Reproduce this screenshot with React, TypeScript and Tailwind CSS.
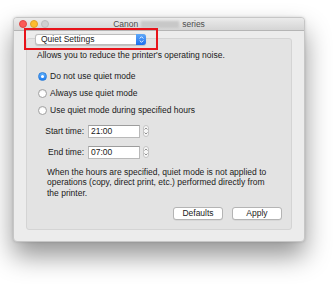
import React from "react";

const font = { fontFamily: '"Liberation Sans", Arial, sans-serif' };

function Radio({ checked, label }: { checked?: boolean; label: string }) {
  return (
    <div className="flex items-center h-[17px]">
      {checked ? (
        <div className="w-[9px] h-[9px] rounded-full bg-gradient-to-b from-[#5fb0fb] to-[#1a7cf2] border border-[#2f7fd8] flex items-center justify-center">
          <div className="w-[3px] h-[3px] rounded-full bg-white" />
        </div>
      ) : (
        <div className="w-[9px] h-[9px] rounded-full bg-white border border-[#9f9f9f] shadow-[inset_0_1px_1px_rgba(0,0,0,0.08)]" />
      )}
      <span className="ml-[3px] text-[8.5px] text-[#1a1a1a] leading-none">{label}</span>
    </div>
  );
}

function Stepper() {
  return (
    <div className="ml-[3px] w-[6px] h-[12px] rounded-[3px] border border-[#c4c4c4] bg-[#f6f6f6] flex flex-col items-center justify-center gap-[2px]">
      <svg width="4" height="3" viewBox="0 0 4 3"><path d="M0.5 2.5 L2 1 L3.5 2.5" stroke="#777" strokeWidth="0.8" fill="none" /></svg>
      <svg width="4" height="3" viewBox="0 0 4 3"><path d="M0.5 0.5 L2 2 L3.5 0.5" stroke="#777" strokeWidth="0.8" fill="none" /></svg>
    </div>
  );
}

function TimeRow({ label, value }: { label: string; value: string }) {
  return (
    <div className="flex items-center h-[13px]">
      <span className="w-[47px] text-right text-[8.5px] text-[#1a1a1a] leading-none">{label}</span>
      <div className="ml-[4px] w-[52px] h-[13px] bg-white border border-[#b9b9b9] border-t-[#9c9c9c] flex items-center pl-[2px] text-[8.5px] text-[#1a1a1a] leading-none">
        {value}
      </div>
      <Stepper />
    </div>
  );
}

function Button({ children, w }: { children: React.ReactNode; w: string }) {
  return (
    <div className={`${w} h-[13px] rounded-[3px] bg-white border border-[#b4b4b4] shadow-[0_0.5px_0.5px_rgba(0,0,0,0.1)] flex items-center justify-center text-[8.5px] text-[#1a1a1a] leading-none`}>
      {children}
    </div>
  );
}

export default function App() {
  return (
    <div className="w-[335px] h-[287px] bg-white overflow-hidden relative" style={font}>
      <div className="pt-[17px] pl-[13px]">
        <div className="w-[292px] h-[225px] bg-[#ececec] rounded-[4px] border border-[#c6c6c6] shadow-[0_14px_26px_rgba(0,0,0,0.42),0_0_3px_rgba(0,0,0,0.15)] overflow-hidden flex flex-col">
          {/* title bar */}
          <div className="h-[13px] bg-gradient-to-b from-[#ebebeb] to-[#d5d5d5] border-b border-[#b5b5b5] flex items-center relative shrink-0">
            <div className="flex items-center gap-[3px] pl-[5px]">
              <div className="w-[8px] h-[8px] rounded-full bg-[#fc5b57] border border-[#df4744]" />
              <div className="w-[8px] h-[8px] rounded-full bg-[#fdbc2e] border border-[#de9f2a]" />
              <div className="w-[8px] h-[8px] rounded-full bg-[#d0d0d0] border border-[#bcbcbc]" />
            </div>
            <div className="absolute inset-0 flex items-center justify-center text-[8.5px] text-[#4d4d4d] leading-none">
              <span>Canon</span>
              <span className="mx-[3px] w-[38px] h-[7px] bg-[#c8c8c8] blur-[1.2px]" />
              <span>series</span>
            </div>
          </div>
          {/* body */}
          <div className="flex-1 flex flex-col px-[12px] pt-[3px] pb-[11px]">
            <div className="ml-[9px] relative z-10 w-[111px] h-[11px] rounded-[3px] bg-white border border-[#bdbdbd] shadow-[0_0.5px_1px_rgba(0,0,0,0.15)] flex items-center">
              <span className="flex-1 pl-[5px] text-[8.5px] text-[#1a1a1a] leading-none">Quiet Settings</span>
              <div className="w-[10px] h-[11px] -my-px -mr-px rounded-r-[3px] bg-gradient-to-b from-[#5fa8f8] to-[#1b6ff0] flex flex-col items-center justify-center gap-[1px]">
                <svg width="5" height="3" viewBox="0 0 5 3"><path d="M0.7 2.5 L2.5 0.7 L4.3 2.5" stroke="white" strokeWidth="0.9" fill="none" /></svg>
                <svg width="5" height="3" viewBox="0 0 5 3"><path d="M0.7 0.5 L2.5 2.3 L4.3 0.5" stroke="white" strokeWidth="0.9" fill="none" /></svg>
              </div>
            </div>
            <div className="-mt-[7px] flex-1 bg-[#e3e3e3] border border-[#d4d4d4] rounded-[3px] flex flex-col pl-[10px] pr-[9px]">
              <div className="mt-[12px] text-[8.5px] text-[#1a1a1a] leading-none">
                Allows you to reduce the printer's operating noise.
              </div>
              <div className="mt-[8px] flex flex-col pl-[1px]">
                <Radio checked label="Do not use quiet mode" />
                <Radio label="Always use quiet mode" />
                <Radio label="Use quiet mode during specified hours" />
              </div>
              <div className="mt-[6px] flex flex-col gap-[8px]">
                <TimeRow label="Start time:" value="21:00" />
                <TimeRow label="End time:" value="07:00" />
              </div>
              <div className="mt-[8px] pl-[10px] text-[8.5px] text-[#1a1a1a] leading-[10.5px]">
                When the hours are specified, quiet mode is not applied to
                <br />
                operations (copy, direct print, etc.) performed directly from
                <br />
                the printer.
              </div>
              <div className="mt-[9px] flex justify-end gap-[9px]">
                <Button w="w-[50px]">Defaults</Button>
                <Button w="w-[50px]">Apply</Button>
              </div>
            </div>
          </div>
        </div>
      </div>
      {/* annotation */}
      <div className="absolute left-[24px] top-[28px] w-[134px] h-[22px] border-2 border-[#e8141b]" />
    </div>
  );
}
